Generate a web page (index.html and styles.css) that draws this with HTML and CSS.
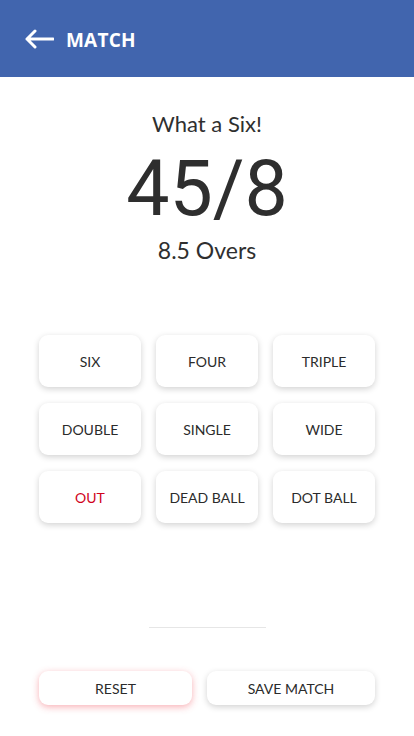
FILE: index.html
```html
<!DOCTYPE html>
<html>
<head>
<meta charset="utf-8">
<link rel="stylesheet" href="styles.css">
</head>
<body>
<header class="appbar">
  <svg class="back" width="30" height="20" viewBox="0 0 30 20">
    <path d="M3 10 H29 M11 2 L3 10 L11 18" fill="none" stroke="#fff" stroke-width="3" stroke-linecap="round" stroke-linejoin="round"/>
  </svg>
  <span class="title">MATCH</span>
</header>
<main class="content">
  <section class="score">
    <div class="msg">What a Six!</div>
    <div class="runs">45/8</div>
    <div class="overs">8.5 Overs</div>
  </section>
  <section class="grid">
    <button class="btn">SIX</button>
    <button class="btn">FOUR</button>
    <button class="btn">TRIPLE</button>
    <button class="btn">DOUBLE</button>
    <button class="btn">SINGLE</button>
    <button class="btn">WIDE</button>
    <button class="btn out">OUT</button>
    <button class="btn">DEAD BALL</button>
    <button class="btn">DOT BALL</button>
  </section>
  <hr class="divider">
  <section class="actions">
    <button class="abtn reset">RESET</button>
    <button class="abtn save">SAVE MATCH</button>
  </section>
</main>
</body>
</html>
```
FILE: styles.css
```css
* { box-sizing: border-box; }
html, body { margin: 0; padding: 0; background: #fff; }
body { width: 414px; height: 736px; overflow: hidden; font-family: Lato, "Open Sans", sans-serif; color: #2b2b2b; }
.appbar {
  height: 77px;
  background: #4165ae;
  display: flex;
  align-items: center;
  padding-left: 24px;
  padding-top: 3px;
}
.back { margin-right: 12px; margin-top: -2px; }
.title { color: #fff; font-family: "Open Sans", sans-serif; font-weight: 700; font-size: 19px; letter-spacing: 0.2px; margin-top: -1px; }
.content { display: flex; flex-direction: column; align-items: center; }
.score { display: flex; flex-direction: column; align-items: center; padding-top: 33px; }
.msg { font-size: 22px; line-height: 28px; color: #2f2f2f; }
.runs { font-family: Roboto, sans-serif; font-size: 77px; line-height: 91px; color: #2e2e2e; margin-top: 6px; }
.overs { font-size: 23px; line-height: 28px; color: #2f2f2f; margin-top: 1px; }
.grid {
  margin-top: 71px;
  display: grid;
  grid-template-columns: repeat(3, 102px);
  grid-auto-rows: 52px;
  column-gap: 15px;
  row-gap: 16px;
}
.btn {
  border: none;
  background: #fff;
  border-radius: 9px;
  box-shadow: 0 2px 6px rgba(0,0,0,0.18);
  font-family: Lato, sans-serif;
  font-size: 14px;
  color: #2b2b2b;
  padding: 0;
}
.btn.out { color: #d0021b; }
.divider {
  width: 117px;
  border: none;
  border-top: 1px solid #e6e6e6;
  margin: 104px 0 0 0;
}
.actions {
  margin-top: 43px;
  display: flex;
  gap: 15px;
}
.abtn {
  height: 34px;
  border: none;
  background: #fff;
  border-radius: 9px;
  font-family: Lato, sans-serif;
  font-size: 14px;
  color: #2b2b2b;
  padding: 0;
}
.reset { width: 153px; box-shadow: 0 2px 7px rgba(240,80,90,0.45); }
.save { width: 168px; box-shadow: 0 2px 6px rgba(0,0,0,0.18); }
```
